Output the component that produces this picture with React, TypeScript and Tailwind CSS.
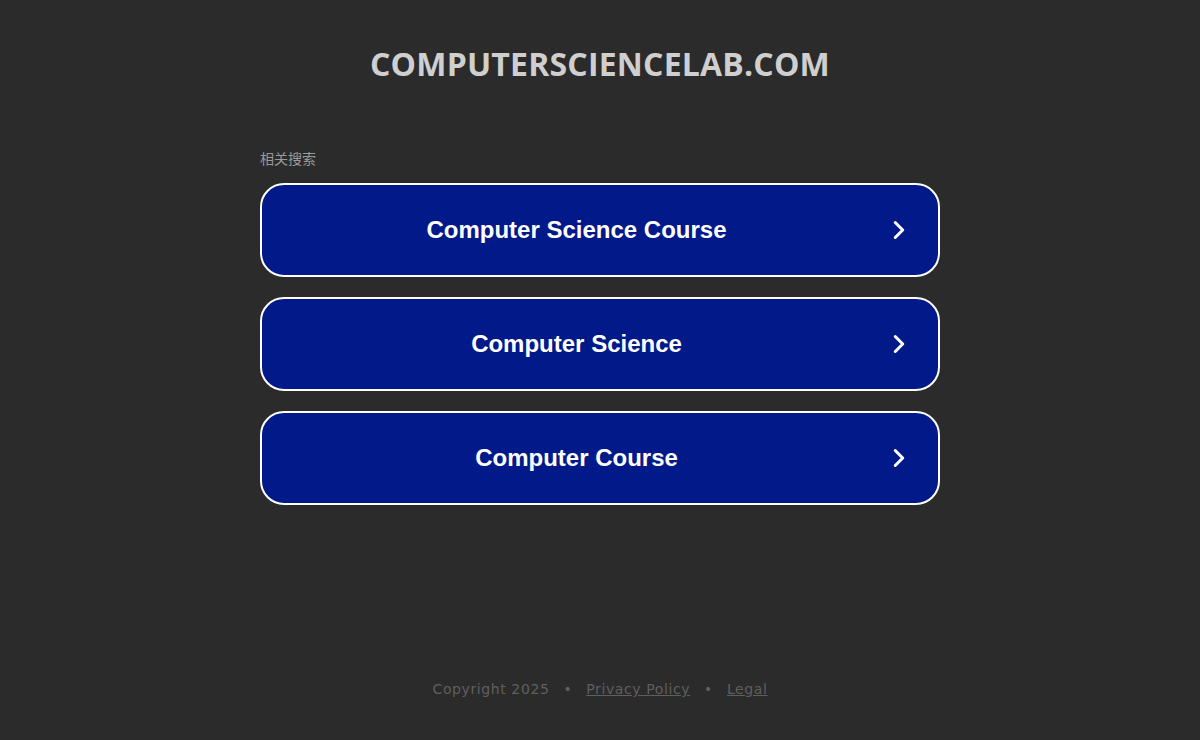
import { ChevronRight } from "lucide-react"

const links = ["Computer Science Course", "Computer Science", "Computer Course"]

export default function App() {
  return (
    <div className="min-h-[740px] w-full bg-[#2b2b2b] flex flex-col items-center" style={{ fontFamily: '"Open Sans", sans-serif' }}>
      <h1 className="mt-[44px] text-[32px] font-bold uppercase text-[#cfcfcf] leading-[40px] tracking-[0.2px]">
        computersciencelab.com
      </h1>

      <div className="mt-[65px] w-[680px]">
        <p className="text-[14px] text-[#9a9a9a] leading-[18px] mb-[16px]" style={{ fontFamily: '"Noto Sans CJK SC", sans-serif' }}>
          相关搜索
        </p>
        <div className="flex flex-col gap-[20px]">
          {links.map((l) => (
            <a
              key={l}
              href="#"
              className="h-[94px] flex items-center rounded-[24px] border-2 border-white bg-[#02198a] text-white"
            >
              <span className="flex-1 pl-[25px] text-center text-[24px] font-bold" style={{ fontFamily: '"Liberation Sans", Arial, sans-serif' }}>
                {l}
              </span>
              <ChevronRight className="w-[30px] h-[30px] mr-[24px] ml-[18px]" strokeWidth={2.4} />
            </a>
          ))}
        </div>
      </div>

      <footer className="mt-[174px] flex items-center gap-[14px] text-[14px] tracking-[0.6px] text-[#5f5f5f]" style={{ fontFamily: '"DejaVu Sans", sans-serif' }}>
        <span>Copyright 2025</span>
        <span>•</span>
        <a href="#" className="underline">Privacy Policy</a>
        <span>•</span>
        <a href="#" className="underline">Legal</a>
      </footer>
    </div>
  )
}
